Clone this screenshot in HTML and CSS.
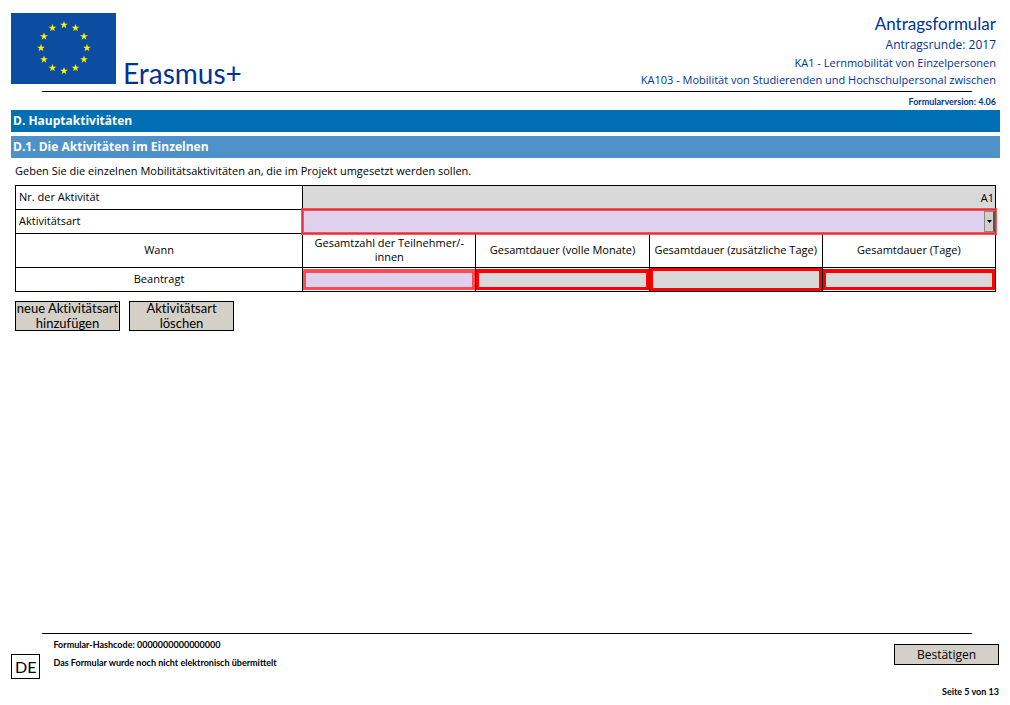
FILE: index.html
```html
<!DOCTYPE html>
<html lang="de">
<head>
<meta charset="utf-8">
<meta name="viewport" content="width=device-width, initial-scale=1">
<title>Erasmus+ Antragsformular</title>
<link rel="stylesheet" href="styles.css">
</head>
<body>
<form class="page">
  <header class="header">
    <div class="brand">
      <svg class="flag" viewBox="0 0 105 71" role="img" aria-label="Europaflagge">
        <defs><path id="star" d="M0-4 1-1.2 3.9-1.2 1.5.6 2.4 3.3 0 1.6-2.4 3.3-1.5.6-3.9-1.2-1-1.2Z"/></defs>
        <rect width="105" height="71" fill="#0d4da1"/>
        <g fill="#fff200">
          <use href="#star" x="53" y="12"/><use href="#star" x="64.5" y="15"/>
          <use href="#star" x="73" y="23.5"/><use href="#star" x="76" y="35"/>
          <use href="#star" x="73" y="46.5"/><use href="#star" x="64.5" y="55"/>
          <use href="#star" x="53" y="58"/><use href="#star" x="41.5" y="55"/>
          <use href="#star" x="33" y="46.5"/><use href="#star" x="30" y="35"/>
          <use href="#star" x="33" y="23.5"/><use href="#star" x="41.5" y="15"/>
        </g>
      </svg>
      <span class="brand-name">Erasmus+</span>
    </div>
    <div class="titles">
      <h1 class="title">Antragsformular</h1>
      <p class="round">Antragsrunde: 2017</p>
      <p class="action">KA1 - Lernmobilität von Einzelpersonen</p>
      <p class="action">KA103 - Mobilität von Studierenden und Hochschulpersonal zwischen</p>
    </div>
  </header>
  <hr class="rule">
  <p class="version">Formularversion: 4.06</p>

  <main class="main">
    <h2 class="bar">D. Hauptaktivitäten</h2>
    <h3 class="bar bar-sub">D.1. Die Aktivitäten im Einzelnen</h3>
    <div class="section">
      <p class="intro">Geben Sie die einzelnen Mobilitätsaktivitäten an, die im Projekt umgesetzt werden sollen.</p>
      <table class="grid">
        <colgroup><col class="col-label"><col><col><col><col></colgroup>
        <tbody>
          <tr class="row">
            <th class="label" scope="row"><label for="nr">Nr. der Aktivität</label></th>
            <td colspan="4"><input class="field readonly number" id="nr" type="text" value="A1" readonly></td>
          </tr>
          <tr class="row">
            <th class="label" scope="row"><label for="art">Aktivitätsart</label></th>
            <td colspan="4">
              <div class="picker">
                <select class="field select" id="art"><option value=""></option></select>
                <span class="picker-button"><svg class="arrow" viewBox="0 0 5 3" aria-hidden="true"><path d="M0 0H5L2.5 3Z"/></svg></span>
              </div>
            </td>
          </tr>
          <tr class="row-head">
            <th scope="col">Wann</th>
            <th scope="col" id="teilnehmer">Gesamtzahl der Teilnehmer/-<wbr>innen</th>
            <th scope="col" id="monate">Gesamtdauer (volle Monate)</th>
            <th scope="col" id="zusatz">Gesamtdauer (zusätzliche Tage)</th>
            <th scope="col" id="tage">Gesamtdauer (Tage)</th>
          </tr>
          <tr class="row">
            <th scope="row">Beantragt</th>
            <td><input class="field boxed editable" type="text" aria-labelledby="teilnehmer"></td>
            <td><input class="field boxed readonly" type="text" aria-labelledby="monate" readonly></td>
            <td><input class="field boxed readonly tall" type="text" aria-labelledby="zusatz" readonly></td>
            <td><input class="field boxed readonly" type="text" aria-labelledby="tage" readonly></td>
          </tr>
        </tbody>
      </table>
      <div class="buttons">
        <button class="button button-double" type="button">neue Aktivitätsart hinzufügen</button>
        <button class="button button-double" type="button">Aktivitätsart löschen</button>
      </div>
    </div>
  </main>

  <footer class="footer">
    <hr class="rule">
    <div class="footer-row">
      <span class="language">DE</span>
      <div class="status">
        <p>Formular-Hashcode: 0000000000000000</p>
        <p>Das Formular wurde noch nicht elektronisch übermittelt</p>
      </div>
      <div class="confirm">
        <button class="button" type="button">Bestätigen</button>
        <p>Seite 5 von 13</p>
      </div>
    </div>
  </footer>
</form>
</body>
</html>
```

FILE: styles.css
```css
* { box-sizing: border-box; }
body {
  margin: 0;
  background: #fff;
  color: #000;
  font: 500 11px/14px "Open Sans", "Noto Sans", sans-serif;
}
h1, h2, h3, p { margin: 0; }
.page {
  display: flex;
  flex-direction: column;
  min-height: 100vh;
  padding: 13px 10px 7px 11px;
}
.header {
  display: flex;
  justify-content: space-between;
  align-items: flex-start;
  padding-bottom: 3px;
  color: #003399;
}
.brand { display: flex; align-items: flex-end; gap: 7px; }
.flag { display: block; width: 105px; height: 71px; }
.brand-name { font: 400 28px/22px Lato, "Noto Sans", sans-serif; }
.titles { padding-right: 4px; text-align: right; }
.title { font: 400 17px/21px Lato, "Noto Sans", sans-serif; }
.round { font-size: 12px; line-height: 21px; }
.action { line-height: 16px; }
.action + .action { padding-top: 1px; }
.rule {
  width: auto;
  height: 1px;
  margin: 0 28px 0 31px;
  border: 0;
  background: #000;
}
.version {
  padding: 4px 4px 2px 0;
  color: #003399;
  font: 700 9px/12px Lato, "Noto Sans", sans-serif;
  text-align: right;
}
.main { flex: 1; }
.bar {
  margin-bottom: 4px;
  padding-left: 2px;
  background: #006fb4;
  color: #fff;
  font-size: 12px;
  line-height: 22px;
  font-weight: 700;
}
.bar-sub { background: #4f91c9; }
.section { padding: 1px 4px 0; }
.intro { padding-bottom: 7px; line-height: 15px; }
.grid {
  width: 100%;
  table-layout: fixed;
  border-collapse: collapse;
}
.col-label { width: 29.3%; }
.grid th, .grid td { padding: 0; border: 1px solid #000; font-weight: 500; }
.grid th { padding-bottom: 1px; }
.grid .label { padding-left: 3px; text-align: left; }
.row { height: 24px; }
.row-head { height: 34px; }
.field {
  display: block;
  width: 100%;
  height: 23px;
  margin: 0;
  padding: 0 1px;
  border: 0;
  border-radius: 0;
  color: #000;
  font: inherit;
}
.readonly { background: #d9d9d9; }
.number { padding-bottom: 1px; text-align: right; }
.picker { position: relative; }
.select {
  appearance: none;
  background: #dfd0ee;
  outline: 3px solid rgba(255, 60, 66, 0.85);
  outline-offset: -1px;
}
.picker-button {
  position: absolute;
  top: 1px;
  right: 0;
  bottom: 1px;
  display: flex;
  align-items: center;
  justify-content: center;
  width: 11px;
  border: 1px solid #888;
  border-right: 2px solid #555;
  background: #d4d0c8;
  pointer-events: none;
}
.arrow { width: 5px; height: 3px; }
.boxed { height: 21px; border: 3px solid #f00; border-top-width: 4px; }
.editable { background: #dfd0ee; border-color: #ff4b50; }
.tall { height: 23px; border-top-width: 3px; }
.buttons { display: flex; gap: 9px; padding-top: 9px; }
.button {
  width: 105px;
  min-height: 21px;
  padding: 0;
  border: 1px solid #000;
  border-radius: 0;
  background: #d4d0c8;
  color: #000;
  font: 500 12px/19px "Open Sans", "Noto Sans", sans-serif;
}
.button-double {
  display: flex;
  align-items: center;
  justify-content: center;
  height: 30px;
  font: 400 13px/15px Lato, "Noto Sans", sans-serif;
  font-variant-ligatures: none;
}
.footer-row { display: flex; padding-top: 5px; }
.language {
  align-self: flex-start;
  margin-top: 15px;
  padding: 0 3px;
  border: 1px solid #000;
  font: 400 16px/23px Lato, "Noto Sans", sans-serif;
}
.status {
  display: grid;
  align-content: start;
  gap: 6px;
  margin-left: 13px;
  font: 700 9px/12px Lato, "Noto Sans", sans-serif;
}
.confirm {
  display: grid;
  gap: 21px;
  margin-left: auto;
  padding: 5px 1px 0 0;
  font: 700 9px/12px Lato, "Noto Sans", sans-serif;
  text-align: right;
}
```
